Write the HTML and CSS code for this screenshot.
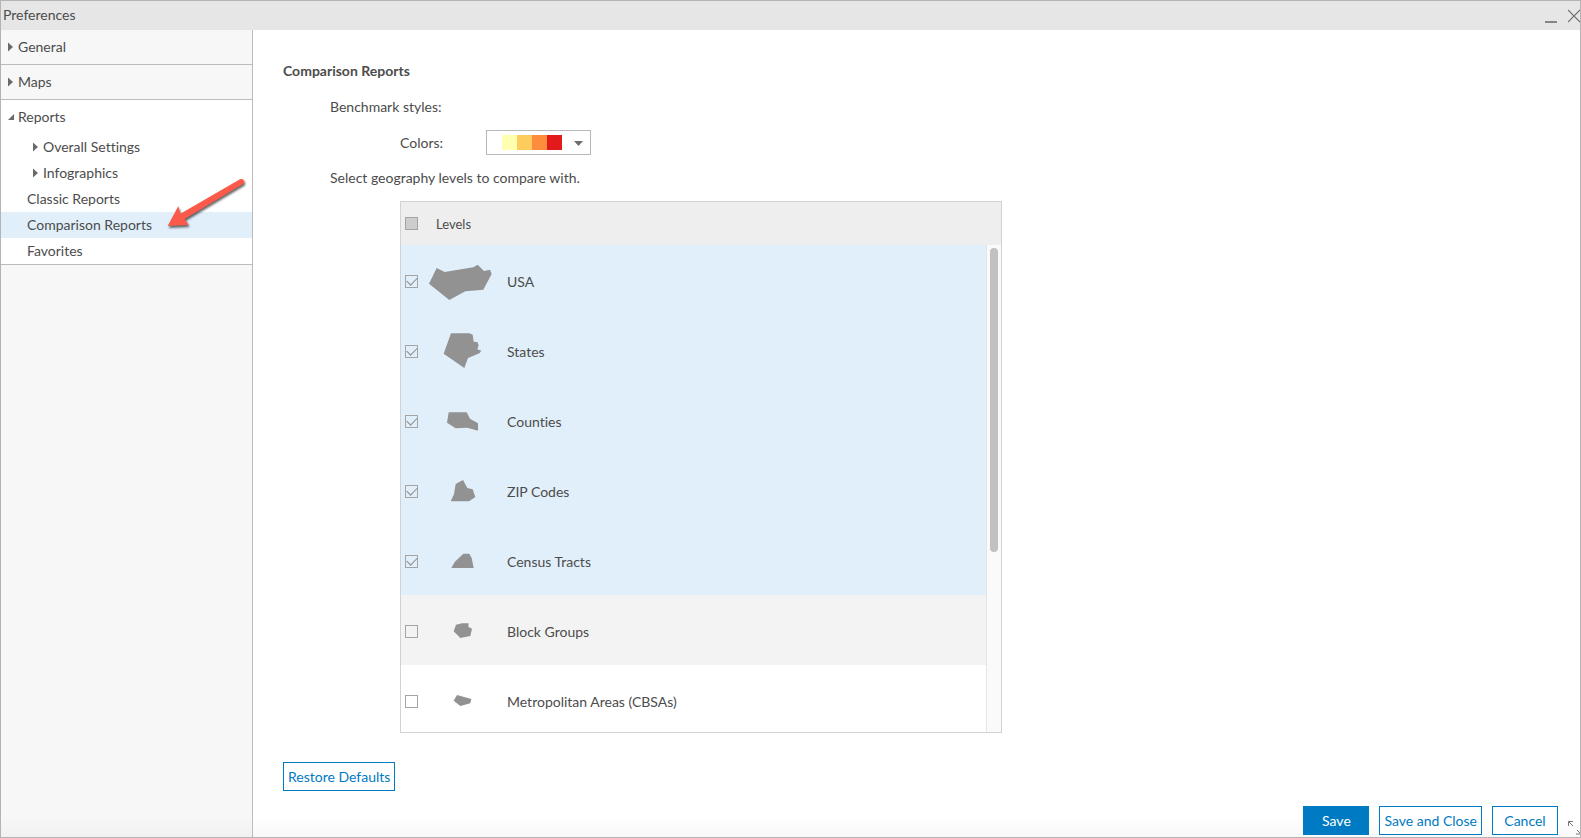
FILE: index.html
```html
<!DOCTYPE html>
<html lang="en">
<head>
<meta charset="utf-8">
<title>Preferences</title>
<link rel="stylesheet" href="styles.css">
</head>
<body>
<div class="window">
  <header class="titlebar">
    <h1 class="titlebar-text">Preferences</h1>
    <div class="titlebar-actions">
      <button class="icon-button" type="button" aria-label="Minimize">
        <svg width="12" height="14" viewBox="0 0 12 14"><path d="M0 13H12" stroke="#858585" stroke-width="2"/></svg>
      </button>
      <button class="icon-button" type="button" aria-label="Close">
        <svg width="12" height="14" viewBox="0 0 12 14"><path d="M0 1L12 13M12 1L0 13" stroke="#6e6e6e" stroke-width="1.2"/></svg>
      </button>
    </div>
  </header>

  <div class="body">
    <nav class="sidebar">
      <a class="section" href="#general"><svg class="caret" viewBox="0 0 7 10"><path d="M1 0.500V9.500L6 5Z"/></svg>General</a>
      <a class="section" href="#maps"><svg class="caret" viewBox="0 0 7 10"><path d="M1 0.500V9.500L6 5Z"/></svg>Maps</a>
      <div class="group">
        <a class="section section-open" href="#reports"><svg class="caret" viewBox="0 0 7 10"><path d="M7 2V8H1Z"/></svg>Reports</a>
        <a class="item item-nested" href="#overall"><svg class="caret" viewBox="0 0 7 10"><path d="M1 0.500V9.500L6 5Z"/></svg>Overall Settings</a>
        <a class="item item-nested" href="#infographics"><svg class="caret" viewBox="0 0 7 10"><path d="M1 0.500V9.500L6 5Z"/></svg>Infographics</a>
        <a class="item" href="#classic">Classic Reports</a>
        <a class="item item-active" href="#comparison" aria-current="page">Comparison Reports
          <svg class="pointer" viewBox="483 144 270 168" aria-hidden="true">
            <path d="M503 288L535 228L541 251L720 148C730 143 738 156 729 162L554 267L566 285Z"/>
          </svg>
        </a>
        <a class="item" href="#favorites">Favorites</a>
      </div>
    </nav>

    <main class="main">
      <h2 class="heading">Comparison Reports</h2>
      <div class="settings">
        <p class="line">Benchmark styles:</p>
        <div class="colors">
          <label class="colors-label" for="colors">Colors:</label>
          <div class="picker">
            <select class="picker-select" id="colors"><option value="ylorrd" aria-label="Yellow to red"></option></select>
            <svg class="picker-arrow" viewBox="0 0 9 5"><path d="M0 0H9L4.500 5Z"/></svg>
          </div>
        </div>
        <p class="line">Select geography levels to compare with.</p>

        <div class="levels">
          <div class="levels-head">
            <input class="check check-all" id="all" type="checkbox">
            <label for="all">Levels</label>
          </div>
          <div class="levels-body">
            <ul class="rows">
              <li class="row"><input class="check" id="usa" type="checkbox" checked><svg class="shape" viewBox="114 216 198 120"><path d="M117 281L140 234L164 246L250 232L263 224L282 243L300 239L305 252L280 299L226 304L178 330Z"/></svg><label for="usa">USA</label></li>
              <li class="row"><input class="check" id="states" type="checkbox" checked><svg class="shape" viewBox="114 426 198 120"><path d="M183 430H238L248 434L251 455L262 456L266 466L262 478L274 482L268 490L234 504L223 534L161 491Z"/></svg><label for="states">States</label></li>
              <li class="row"><input class="check" id="counties" type="checkbox" checked><svg class="shape" viewBox="114 66 198 120"><path d="M176 97H230L240 116L264 130V152L232 143L197 145L171 128Z"/></svg><label for="counties">Counties</label></li>
              <li class="row"><input class="check" id="zip" type="checkbox" checked><svg class="shape" viewBox="114 276 198 120"><path d="M197 312L219 300L232 324L248 328L256 351L237 364H182L192 343Z"/></svg><label for="zip">ZIP Codes</label></li>
              <li class="row"><input class="check" id="tracts" type="checkbox" checked><svg class="shape" viewBox="114 486 198 120"><path d="M220 521H238L245 534L251 564H184L194 546Z"/></svg><label for="tracts">Census Tracts</label></li>
              <li class="row row-hover"><input class="check" id="groups" type="checkbox"><svg class="shape" viewBox="114 156 198 120"><path d="M198 194L216 190H236L235 200L246 206L241 228L211 234L191 214Z"/></svg><label for="groups">Block Groups</label></li>
              <li class="row"><input class="check" id="cbsa" type="checkbox"><svg class="shape" viewBox="114 366 198 120"><path d="M201 405L244 417L241 430L211 438L191 422Z"/></svg><label for="cbsa">Metropolitan Areas (CBSAs)</label></li>
            </ul>
            <div class="scrollbar"><div class="thumb"></div></div>
          </div>
        </div>
      </div>
      <button class="button restore" type="button">Restore Defaults</button>

      <footer class="footer">
        <button class="button button-primary" type="button">Save</button>
        <button class="button" type="button">Save and Close</button>
        <button class="button" type="button">Cancel</button>
        <svg class="resize" viewBox="0 0 12 16" aria-hidden="true"><path d="M0.500 7V2.500H5M0.500 2.500L5 7M9 11L12 14M8 15H12"/></svg>
      </footer>
    </main>
  </div>
</div>
</body>
</html>
```
FILE: styles.css
```css
* {
  box-sizing: border-box;
}

body {
  margin: 0;
  font-family: Lato, "Open Sans", sans-serif;
  font-size: 14px;
  font-variant-ligatures: none;
  line-height: 20px;
  color: #4c4c4c;
}

h1, h2, p, ul {
  margin: 0;
  padding: 0;
  font-size: 14px;
}

a {
  color: inherit;
  text-decoration: none;
}

button {
  font: inherit;
  cursor: pointer;
}

.window {
  display: flex;
  flex-direction: column;
  min-height: 100vh;
  border: 1px solid #b4b4b4;
  background: #fff;
}

.titlebar {
  display: flex;
  align-items: center;
  justify-content: space-between;
  height: 29px;
  padding-left: 2px;
  background: #e6e6e6;
}

.titlebar-text {
  padding-bottom: 2px;
  font-weight: 400;
}

.titlebar-actions {
  display: flex;
  gap: 11px;
}

.icon-button {
  display: flex;
  padding: 0;
  border: 0;
  background: none;
}

.body {
  display: flex;
  flex: 1;
}

.sidebar {
  flex: none;
  width: 252px;
  border-right: 1px solid #bcbcbc;
  background: linear-gradient(to top, #f1f1f1, #f7f7f7 20px);
}

.section {
  display: flex;
  align-items: center;
  gap: 4px;
  height: 35px;
  padding-left: 6px;
  border-bottom: 1px solid #bcbcbc;
}

.section-open {
  height: 34px;
  border-bottom: 0;
}

.group {
  border-bottom: 1px solid #bcbcbc;
  background: #fff;
}

.caret {
  width: 7px;
  height: 10px;
  fill: #6a6a6a;
}

.item {
  position: relative;
  display: flex;
  align-items: center;
  gap: 4px;
  height: 26px;
  padding-left: 26px;
}

.item-nested {
  padding-left: 31px;
}

.item-active {
  background: #e1effa;
}

.pointer {
  position: absolute;
  top: -34px;
  left: 160px;
  width: 90px;
  height: 56px;
  fill: #fb5a4b;
  filter: drop-shadow(1px 2px 1px rgba(0, 0, 0, 0.6));
}

.main {
  display: flex;
  flex: 1;
  flex-direction: column;
  min-width: 0;
  padding: 31px 0 2px 30px;
  background: linear-gradient(to top, #f8f8f8, #fff 20px);
}

.heading {
  font-weight: 700;
}

.settings {
  display: flex;
  flex-direction: column;
  gap: 13px;
  padding: 16px 0 0 47px;
}

.colors {
  display: flex;
  align-items: center;
  padding-left: 70px;
}

.colors-label {
  width: 86px;
}

.picker {
  position: relative;
  display: flex;
}

.picker-select {
  appearance: none;
  width: 105px;
  height: 25px;
  border: 1px solid #b8b8b8;
  border-radius: 0;
  background: linear-gradient(to right, #ffffb2 15px, #fecc5c 15px 30px, #fd8d3c 30px 45px, #e31a1c 45px) 15px center / 60px 15px no-repeat #fff;
}

.picker-arrow {
  position: absolute;
  top: 11px;
  right: 8px;
  width: 9px;
  height: 5px;
  fill: #6e6e6e;
  pointer-events: none;
}

.levels {
  width: 100%;
  max-width: 672px;
  padding-left: 70px;
}

.levels-head {
  display: flex;
  align-items: center;
  gap: 18px;
  height: 44px;
  padding-left: 4px;
  border: 1px solid #d2d2d2;
  border-bottom: 0;
  background: #eee;
  font-size: 13px;
}

.levels-body {
  display: flex;
  height: 488px;
  border: 1px solid #d2d2d2;
  border-top: 0;
}

.rows {
  flex: 1;
  overflow: hidden;
  list-style: none;
}

.row {
  display: flex;
  align-items: center;
  height: 70px;
  padding: 3px 0 0 4px;
}

.row:has(:checked) {
  background: #e1effa;
}

.row-hover {
  background: #f3f3f3;
}

.check {
  appearance: none;
  display: grid;
  place-items: center;
  flex: none;
  width: 13px;
  height: 13px;
  margin: 0;
  border: 1px solid #a4a4a4;
  background: transparent;
}

.check-all {
  background: #cdcdcd;
}

.check:checked::before {
  content: "";
  width: 9px;
  height: 5px;
  margin-bottom: 3px;
  border: solid #8c8c8c;
  border-width: 0 0 1px 1px;
  rotate: -45deg;
}

.shape {
  width: 66px;
  height: 40px;
  margin: 0 13px 0 10px;
  fill: #929292;
}

.scrollbar {
  width: 15px;
  padding: 3px;
  border-left: 1px solid #e4e4e4;
  background: #fafafa;
}

.thumb {
  width: 8px;
  height: 304px;
  border-radius: 4px;
  background: #c1c1c1;
}

.button {
  height: 29px;
  min-width: 66px;
  padding: 0 4px;
  border: 1px solid #007ac2;
  background: #fff;
  color: #007ac2;
}

.button-primary {
  background: #007ac2;
  color: #fff;
}

.restore {
  align-self: flex-start;
  margin-top: 29px;
}

.footer {
  display: flex;
  justify-content: flex-end;
  gap: 10px;
  margin-top: auto;
}

.resize {
  align-self: flex-end;
  width: 12px;
  height: 16px;
  fill: none;
  stroke: #777;
}
```
